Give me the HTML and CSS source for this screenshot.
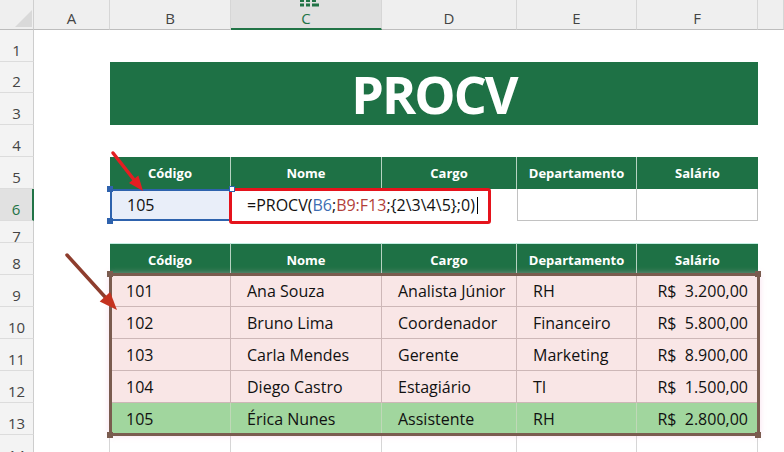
FILE: index.html
```html
<!DOCTYPE html>
<html lang="pt-BR">
<head>
<meta charset="utf-8">
<title>PROCV</title>
<link rel="stylesheet" href="styles.css">
</head>
<body>
<div class="sheet">
  <!-- column headers -->
  <div class="corner"><svg width="17" height="17" viewBox="0 0 17 17"><polygon points="17,0 17,17 0,17" fill="#d9d9d9"/></svg></div>
  <div class="ch">A</div>
  <div class="ch">B</div>
  <div class="ch sel">C<svg class="colicon" width="20" height="7" viewBox="0 0 20 7"><rect x="0" y="0" width="4" height="2" fill="#217346"/><rect x="6" y="0" width="4" height="2" fill="#217346"/><rect x="12" y="0" width="4" height="2" fill="#217346"/><rect x="0" y="3.5" width="4" height="3" fill="#217346"/><rect x="6" y="3.5" width="4" height="3" fill="#217346"/><rect x="12" y="3.5" width="7" height="3" fill="#217346"/></svg></div>
  <div class="ch">D</div>
  <div class="ch">E</div>
  <div class="ch">F</div>
  <div class="ch"></div>

  <!-- row 1 -->
  <div class="rh">1</div><div></div><div></div><div></div><div></div><div></div><div></div><div></div>
  <!-- row 2-3 -->
  <div class="rh">2</div><div></div><div class="title">PROCV</div><div></div>
  <div class="rh">3</div><div></div><div></div>
  <!-- row 4 -->
  <div class="rh">4</div><div></div><div></div><div></div><div></div><div></div><div></div><div></div>
  <!-- row 5 -->
  <div class="rh">5</div><div></div>
  <div class="gh">Código</div><div class="gh">Nome</div><div class="gh">Cargo</div><div class="gh">Departamento</div><div class="gh last">Salário</div>
  <div></div>
  <!-- row 6 -->
  <div class="rh sel">6</div><div></div>
  <div class="t b6">105</div>
  <div class="t fx">=PROCV(<span class="ref1">B6</span>;<span class="ref2">B9:F13</span>;{2\3\4\5};0)<span class="caret"></span></div>
  <div class="bx first"></div><div class="bx"></div>
  <div></div>
  <!-- row 7 -->
  <div class="rh">7</div><div></div><div></div><div></div><div></div><div></div><div></div><div></div>
  <!-- row 8 -->
  <div class="rh">8</div><div></div>
  <div class="gh top">Código</div><div class="gh top">Nome</div><div class="gh top">Cargo</div><div class="gh top">Departamento</div><div class="gh top last">Salário</div>
  <div></div>
  <!-- row 9 -->
  <div class="rh">9</div><div></div>
  <div class="t pk">101</div><div class="t pk">Ana Souza</div><div class="t pk">Analista Júnior</div><div class="t pk">RH</div><div class="t pk money">R$  3.200,00</div>
  <div></div>
  <!-- row 10 -->
  <div class="rh">10</div><div></div>
  <div class="t pk">102</div><div class="t pk">Bruno Lima</div><div class="t pk">Coordenador</div><div class="t pk">Financeiro</div><div class="t pk money">R$  5.800,00</div>
  <div></div>
  <!-- row 11 -->
  <div class="rh">11</div><div></div>
  <div class="t pk">103</div><div class="t pk">Carla Mendes</div><div class="t pk">Gerente</div><div class="t pk">Marketing</div><div class="t pk money">R$  8.900,00</div>
  <div></div>
  <!-- row 12 -->
  <div class="rh">12</div><div></div>
  <div class="t pk">104</div><div class="t pk">Diego Castro</div><div class="t pk">Estagiário</div><div class="t pk">TI</div><div class="t pk money">R$  1.500,00</div>
  <div></div>
  <!-- row 13 -->
  <div class="rh">13</div><div></div>
  <div class="t gr">105</div><div class="t gr">Érica Nunes</div><div class="t gr">Assistente</div><div class="t gr">RH</div><div class="t gr money">R$  2.800,00</div>
  <div></div>
  <!-- row 14 -->
  <div class="rh">14</div><div class="r14"></div><div class="r14"></div><div class="r14"></div><div class="r14"></div><div class="r14"></div><div class="r14"></div><div></div>

  <!-- overlays -->
  <div class="frame"></div>
  <div class="hd" style="left:107px;top:271px"></div>
  <div class="hd" style="left:755px;top:271px"></div>
  <div class="hd" style="left:107px;top:432px"></div>
  <div class="hd" style="left:755px;top:432px"></div>
  <div class="redbox"></div>
  <div class="bh" style="left:107px;top:186px"></div>
  <div class="bh" style="left:107px;top:218px"></div>
  <div class="bh hollow" style="left:229px;top:186px"></div>
  <svg class="arrows" width="784" height="452" viewBox="0 0 784 452">
    <line x1="113" y1="153" x2="135" y2="181" stroke="#e41e22" stroke-width="3.5" stroke-linecap="round"/>
    <polygon points="143,191 129,182.9 138.4,175.5" fill="#e41e22"/>
    <line x1="67" y1="255" x2="106" y2="298" stroke="#8e3d2d" stroke-width="3.5" stroke-linecap="round"/>
    <polygon points="117,310 99.7,301.4 110.1,292" fill="#c4321f"/>
  </svg>
</div>
</body>
</html>
```

FILE: styles.css
```css
html, body {
  margin: 0;
  padding: 0;
  background: #ffffff;
  overflow: hidden;
}

body {
  font-family: "Open Sans", "Noto Sans", sans-serif;
}

.sheet {
  position: relative;
  display: grid;
  grid-template-columns: 34px 76px 121px 151px 135px 120px 121px 26px;
  grid-template-rows: 30px 32px 31px 32px 32px 32px 32px 22px 32px 32px 32px 32px 32px 32px 32px;
  width: 784px;
  height: 452px;
  overflow: hidden;
}

.sheet > div {
  box-sizing: border-box;
  min-width: 0;
}

.corner {
  background: #efefef;
  border-right: 1px solid #cfcfcf;
  border-bottom: 1px solid #bcbcbc;
  display: flex;
  justify-content: flex-end;
  align-items: flex-end;
  padding: 0 1px 2px 0;
}

.corner svg {
  display: block;
}

.ch {
  background: #efefef;
  border-right: 1px solid #d6d6d6;
  border-bottom: 1px solid #bdbdbd;
  color: #444444;
  font-size: 15px;
  display: flex;
  justify-content: center;
  align-items: center;
  padding-top: 7px;
}

.ch.sel {
  position: relative;
  background: #e0e0e0;
  color: #217346;
  border-bottom: 2px solid #217346;
}

.colicon {
  position: absolute;
  left: 69px;
  top: 0;
}

.rh {
  background: #f3f3f3;
  border-right: 1px solid #cdcdcd;
  border-bottom: 1px solid #dcdcdc;
  color: #444444;
  font-size: 15px;
  display: flex;
  justify-content: center;
  align-items: center;
  padding-top: 8px;
}

.rh.sel {
  background: #e1e1e1;
  color: #217346;
  border-right: 2px solid #217346;
}

.title {
  grid-column: 3 / 8;
  grid-row: span 2;
  background: #1e7145;
  color: #ffffff;
  font-weight: 700;
  font-size: 52px;
  letter-spacing: -2px;
  line-height: 1;
  display: flex;
  align-items: center;
  justify-content: center;
}

.gh {
  background: #1e7145;
  color: #ffffff;
  font-weight: 700;
  font-size: 13px;
  display: flex;
  align-items: center;
  justify-content: center;
  border-right: 1px solid #b7d2c2;
}

.gh.top {
  border-top: 1px solid #c3eee2;
}

.gh.last {
  border-right: none;
}

.t {
  font-size: 16px;
  color: #111111;
  display: flex;
  align-items: center;
  padding-left: 16px;
  white-space: nowrap;
}

.b6 {
  background: #e9eef9;
  border: 2px solid #2e62ad;
  border-right: none;
  padding-left: 15px;
}

.fx {
  grid-column: span 2;
  padding-left: 16px;
}

.ref1 {
  color: #3d6db3;
}

.ref2 {
  color: #b23f3a;
}

.caret {
  display: inline-block;
  width: 1px;
  height: 17px;
  background: #000000;
  margin-left: 2px;
}

.bx {
  border-right: 1px solid #c2c2c2;
  border-bottom: 1px solid #c2c2c2;
}

.bx.first {
  border-left: 1px solid #c2c2c2;
}

.pk {
  background: #f9e6e6;
  border-right: 1px solid #cdb7b7;
  border-bottom: 1px solid #cdb7b7;
}

.gr {
  background: #a1d69e;
  border-right: 1px solid #c0d8b8;
}

.money {
  justify-content: flex-end;
  padding-left: 0;
  padding-right: 10px;
  white-space: pre;
  border-right: none;
}

.r14 {
  border-right: 1px solid #d6d6d6;
}

.frame {
  position: absolute;
  left: 109px;
  top: 273px;
  width: 651px;
  height: 163px;
  border: 3px solid #7a5c4f;
  box-shadow: 0 0 6px rgba(240, 185, 215, 0.45);
}

.hd {
  position: absolute;
  width: 6px;
  height: 6px;
  background: #7a5c4f;
}

.redbox {
  position: absolute;
  left: 229px;
  top: 188px;
  width: 262px;
  height: 36px;
  border: 3px solid #e5131c;
  border-radius: 3px;
}

.bh {
  position: absolute;
  width: 6px;
  height: 6px;
  background: #2e62ad;
}

.bh.hollow {
  background: #ffffff;
  border: 1px solid #2e62ad;
}

.arrows {
  position: absolute;
  left: 0;
  top: 0;
  pointer-events: none;
}
```
